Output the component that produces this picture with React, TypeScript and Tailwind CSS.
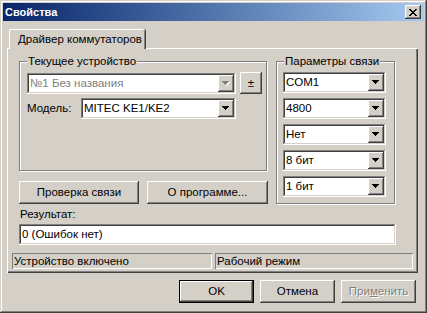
import React from 'react';

const raised =
  'shadow-[inset_-1px_-1px_0_#404040,inset_1px_1px_0_#ffffff,inset_-2px_-2px_0_#808080,inset_2px_2px_0_#d4d0c8]';
const sunken =
  'shadow-[inset_-1px_-1px_0_#ffffff,inset_1px_1px_0_#808080,inset_-2px_-2px_0_#d4d0c8,inset_2px_2px_0_#404040]';

function Arrow({ disabled = false }: { disabled?: boolean }) {
  return (
    <svg width="8" height="5" viewBox="0 0 8 5" shapeRendering="crispEdges">
      {disabled && <path d="M1 1h7v1h-1v1h-1v1h-1v1h-1v-1h-1v-1h-1v-1h-1z" fill="#ffffff" />}
      <path d="M0 0h7v1h-1v1h-1v1h-1v1h-1v-1h-1v-1h-1v-1h-1z" fill={disabled ? '#808080' : '#000000'} />
    </svg>
  );
}

function Combo({ text, width, disabled = false }: { text: string; width: string; disabled?: boolean }) {
  return (
    <div className={`${width} h-[21px] bg-white ${sunken} flex items-center p-[2px]`}>
      <span className={`flex-1 pl-[1px] truncate ${disabled ? 'text-[#808080]' : 'text-black'}`}>{text}</span>
      <div className={`w-[16px] h-[17px] bg-[#d4d0c8] ${raised} flex items-center justify-center`}>
        <Arrow disabled={disabled} />
      </div>
    </div>
  );
}

function Group({ title, className, children }: { title: string; className: string; children: React.ReactNode }) {
  return (
    <div
      className={`relative border border-[#808080] shadow-[1px_1px_0_#ffffff,inset_1px_1px_0_#ffffff] ${className}`}
    >
      <span className="absolute -top-[8px] left-[7px] px-[1px] bg-[#d4d0c8] leading-[14px]">{title}</span>
      {children}
    </div>
  );
}

function Button({ children, width, className = '' }: { children: React.ReactNode; width: string; className?: string }) {
  return (
    <div className={`${width} h-[23px] bg-[#d4d0c8] ${raised} flex items-center justify-center ${className}`}>
      {children}
    </div>
  );
}

export default function App() {
  return (
    <div className="w-[427px] h-[313px] bg-[#d4d0c8] text-[11.5px] leading-[13px] text-black font-['Liberation_Sans',Arial,sans-serif] p-[3px] shadow-[inset_-1px_-1px_0_#404040,inset_1px_1px_0_#d4d0c8,inset_-2px_-2px_0_#808080,inset_2px_2px_0_#ffffff] overflow-hidden">
      {/* заголовок */}
      <div className="h-[18px] flex items-center justify-between bg-gradient-to-r from-[#0a246a] to-[#a6caf0] pl-[2px] pr-[3px]">
        <span className="text-white font-bold text-[11px]">Свойства</span>
        <div className={`w-[16px] h-[14px] bg-[#d4d0c8] ${raised} flex items-center justify-center`}>
          <svg width="8" height="7" viewBox="0 0 8 7" shapeRendering="crispEdges">
            <path
              d="M0 0h2v1h1v1h2v-1h1v-1h2v1h-1v1h-1v1h-1v1h1v1h1v1h1v1h-2v-1h-1v-1h-2v1h-1v1h-2v-1h1v-1h1v-1h1v-1h-1v-1h-1v-1h-1z"
              fill="#000000"
            />
          </svg>
        </div>
      </div>

      <div className="pl-[4px] w-[415px]">
        {/* вкладка */}
        <div className="mt-[8px] ml-[2px] flex">
          <div className="relative z-10 -mb-[1px] w-[136px] h-[20px] bg-[#d4d0c8] border-t border-l border-white rounded-tl-[2px] rounded-tr-[2px] shadow-[inset_-1px_0_0_#808080,1px_0_0_#404040] flex items-center pl-[8px]">
            Драйвер коммутаторов
          </div>
        </div>

        {/* панель */}
        <div className="w-[411px] h-[225px] shadow-[inset_1px_1px_0_#ffffff,inset_-1px_-1px_0_#404040,inset_-2px_-2px_0_#808080] pt-[13px]">
          <div className="px-[12px]">
            <div className="flex items-start">
              <div className="w-[249px]">
                <Group title="Текущее устройство" className="w-[248px] h-[110px] pt-[10px] pl-[7px]">
                  <div className="flex items-center">
                    <Combo text="№1 Без названия" width="w-[209px]" disabled />
                    <div className={`ml-[4px] w-[22px] h-[22px] bg-[#d4d0c8] ${raised} flex items-center justify-center`}>
                      ±
                    </div>
                  </div>
                  <div className="flex items-center mt-[4px]">
                    <span className="w-[54px]">Модель:</span>
                    <Combo text="MITEC KE1/KE2" width="w-[155px]" />
                  </div>
                </Group>
                <div className="flex gap-[8px] mt-[10px]">
                  <Button width="w-[120px]">Проверка связи</Button>
                  <Button width="w-[121px]">О программе...</Button>
                </div>
              </div>
              <Group title="Параметры связи" className="ml-[8px] w-[119px] h-[143px] pt-[10px] pl-[6px]">
                <div className="flex flex-col gap-[5px]">
                  <Combo text="COM1" width="w-[103px]" />
                  <Combo text="4800" width="w-[103px]" />
                  <Combo text="Нет" width="w-[103px]" />
                  <Combo text="8 бит" width="w-[103px]" />
                  <Combo text="1 бит" width="w-[103px]" />
                </div>
              </Group>
            </div>
            <div className="mt-[4px] h-[14px] pl-[1px]">Результат:</div>
            <div className={`mt-[2px] w-[377px] h-[21px] bg-white ${sunken} flex items-center pl-[3px]`}>
              0 (Ошибок нет)
            </div>
          </div>

          {/* строка состояния */}
          <div className="flex gap-[3px] px-[5px] mt-[8px]">
            <div className="w-[200px] h-[16px] shadow-[inset_1px_1px_0_#808080,inset_-1px_-1px_0_#ffffff] flex items-center pl-[2px]">
              Устройство включено
            </div>
            <div className="w-[198px] h-[16px] shadow-[inset_1px_1px_0_#808080,inset_-1px_-1px_0_#ffffff] flex items-center pl-[2px]">
              Рабочий режим
            </div>
          </div>
        </div>

        {/* кнопки */}
        <div className="flex justify-end gap-[6px] pr-[2px] mt-[7px]">
          <div className="w-[75px] h-[23px] border border-black">
            <div className={`w-full h-full bg-[#d4d0c8] ${raised} flex items-center justify-center`}>OK</div>
          </div>
          <Button width="w-[75px]">Отмена</Button>
          <Button width="w-[75px]" className="text-[#808080] [text-shadow:1px_1px_0_#ffffff]">
            <span>
              При<span className="underline">м</span>енить
            </span>
          </Button>
        </div>
      </div>
    </div>
  );
}
